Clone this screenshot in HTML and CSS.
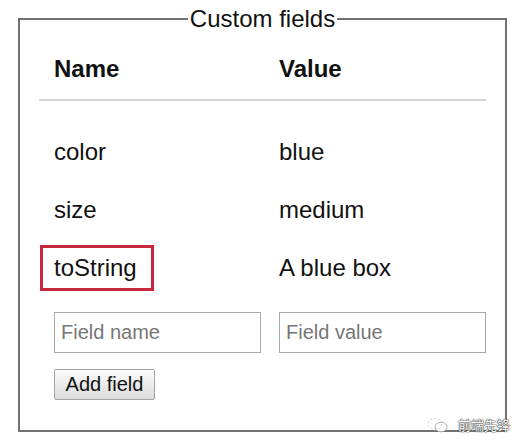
FILE: index.html
```html
<!DOCTYPE html>
<html>
<head>
<meta charset="utf-8">
<link rel="stylesheet" href="styles.css">
</head>
<body>
<fieldset class="box">
  <legend class="legend">Custom fields</legend>
  <table class="fields">
    <colgroup><col class="col-name"><col></colgroup>
    <thead>
      <tr><th>Name</th><th>Value</th></tr>
    </thead>
    <tbody>
      <tr class="first"><td>color</td><td>blue</td></tr>
      <tr><td>size</td><td>medium</td></tr>
      <tr><td><span class="mark">toString</span></td><td>A blue box</td></tr>
      <tr class="inputs">
        <td><input class="field" type="text" placeholder="Field name"></td>
        <td><input class="field" type="text" placeholder="Field value"></td>
      </tr>
    </tbody>
  </table>
  <div class="actions"><button class="add" type="button">Add field</button></div>
</fieldset>
<div class="watermark">
  <svg class="wm-icon" width="22" height="16" viewBox="0 0 22 16">
    <ellipse cx="8" cy="7" rx="7" ry="5.5" fill="none" stroke="#fff" stroke-width="1.6"/>
    <ellipse cx="14" cy="10" rx="6" ry="4.8" fill="#fff" stroke="#999" stroke-width="0.8"/>
    <ellipse cx="8" cy="7" rx="7" ry="5.5" fill="none" stroke="#999" stroke-width="0.5" stroke-dasharray="2 2"/>
  </svg>
  <span class="wm-text">前端先锋</span>
</div>
</body>
</html>
```
FILE: styles.css
```css
html, body {
  margin: 0;
  background: #fff;
}
body {
  padding-top: 5px;
  font-family: "Liberation Sans", Arial, sans-serif;
  color: #111;
  position: relative;
  height: 443px;
}
.box {
  margin: 0 0 0 18px;
  width: 489px;
  box-sizing: border-box;
  border: 2px solid #727272;
  padding: 0 19px 30px;
  min-width: 0;
}
.legend {
  margin: 0 auto;
  padding: 0 2px;
  font-size: 24px;
  line-height: 28px;
}
.fields {
  width: 100%;
  border-collapse: collapse;
  table-layout: fixed;
  font-size: 24px;
  line-height: 28px;
}
.col-name {
  width: 225px;
}
.fields th {
  text-align: left;
  font-weight: bold;
  padding: 22px 15px 16px;
  border-bottom: 2px solid #d4d4d4;
}
.fields td {
  padding: 15px 15px;
  vertical-align: top;
}
.fields tr.first td {
  padding-top: 37px;
}
.fields tr.inputs td {
  padding: 15px 0 0 15px;
}
.mark {
  position: relative;
}
.mark::after {
  content: "";
  position: absolute;
  top: -9px;
  bottom: -10px;
  left: -14px;
  right: -17px;
  border: 3px solid #c6283a;
}
.field {
  display: block;
  box-sizing: border-box;
  width: 207px;
  height: 41px;
  margin: 0;
  border: 1px solid #a8a8a8;
  border-radius: 0;
  padding: 0 6px;
  font-family: "Liberation Sans", Arial, sans-serif;
  font-size: 20px;
  color: #111;
  background: #fff;
}
.field::placeholder {
  color: #767676;
}
.actions {
  padding: 16px 0 0 15px;
}
.add {
  box-sizing: border-box;
  height: 31px;
  width: 101px;
  margin: 0;
  padding: 0;
  font-family: "Liberation Sans", Arial, sans-serif;
  font-size: 20px;
  color: #111;
  border: 1px solid #a3a3a3;
  border-radius: 2px;
  background: linear-gradient(#fbfbfb, #dcdcdc);
}
.watermark {
  position: absolute;
  left: 427px;
  top: 416px;
  display: flex;
  align-items: center;
  gap: 9px;
}
.wm-text {
  font-family: "Noto Sans CJK SC", sans-serif;
  font-size: 13px;
  line-height: 18px;
  color: #fff;
  letter-spacing: 0;
  text-shadow: 0 0 1px #333, 0 0 1px #333, 0 0 2px #666;
}
```
